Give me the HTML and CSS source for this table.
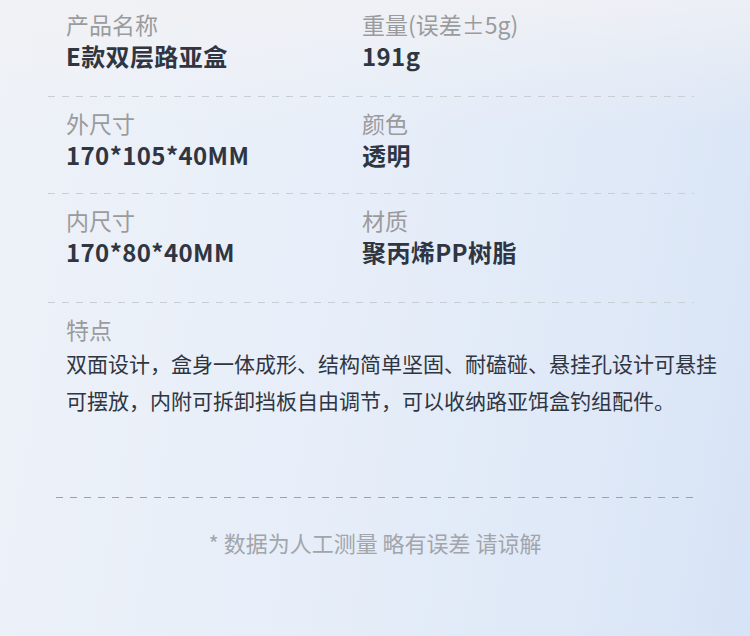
FILE: index.html
```html
<!DOCTYPE html>
<html lang="zh-CN">
<head>
<meta charset="utf-8">
<link rel="stylesheet" href="styles.css">
</head>
<body>
<main class="page">
  <section class="spec">
    <div class="row row-first">
      <div class="cell">
        <div class="label">产品名称</div>
        <div class="value">E款双层路亚盒</div>
      </div>
      <div class="cell">
        <div class="label">重量(误差±5g)</div>
        <div class="value">191g</div>
      </div>
    </div>
    <div class="dash"></div>
    <div class="row">
      <div class="cell">
        <div class="label">外尺寸</div>
        <div class="value">170*105*40MM</div>
      </div>
      <div class="cell">
        <div class="label">颜色</div>
        <div class="value">透明</div>
      </div>
    </div>
    <div class="dash"></div>
    <div class="row row-tall">
      <div class="cell">
        <div class="label">内尺寸</div>
        <div class="value">170*80*40MM</div>
      </div>
      <div class="cell">
        <div class="label">材质</div>
        <div class="value">聚丙烯PP树脂</div>
      </div>
    </div>
    <div class="dash"></div>
    <div class="feature">
      <div class="label">特点</div>
      <p class="desc">双面设计，盒身一体成形、结构简单坚固、耐磕碰、悬挂孔设计可悬挂可摆放，内附可拆卸挡板自由调节，可以收纳路亚饵盒钓组配件。</p>
    </div>
  </section>
  <div class="dash dash-dark"></div>
  <p class="note">* 数据为人工测量 略有误差 请谅解</p>
</main>
</body>
</html>
```

FILE: styles.css
```css
html, body {
  margin: 0;
  padding: 0;
}
body {
  width: 750px;
  height: 636px;
  overflow: hidden;
  font-family: "Noto Sans CJK SC", "Noto Sans", sans-serif;
  background:
    linear-gradient(180deg, rgba(242, 242, 244, 0.75) 0px, rgba(242, 242, 244, 0) 130px),
    linear-gradient(100deg, #eef2f8 0%, #e7eef9 45%, #dee8f7 80%, #d7e3f6 100%);
}
.page {
  height: 636px;
}
.spec {
  padding: 0 0 0 48px;
  width: 646px;
}
.row {
  display: grid;
  grid-template-columns: 296px 1fr;
  padding: 10px 0 22px 18px;
}
.row-first {
  padding-top: 8px;
  padding-bottom: 24px;
}
.row-tall {
  padding-bottom: 34px;
}
.label {
  font-size: 23px;
  line-height: 32px;
  color: #9b9b9d;
  font-weight: 400;
}
.value {
  font-size: 24px;
  line-height: 32px;
  letter-spacing: 0.4px;
  color: #2f3541;
  font-weight: 700;
}
.dash {
  height: 1px;
  background: repeating-linear-gradient(90deg, #c9cdd4 0 7px, transparent 7px 14px);
}
.feature {
  padding: 10px 0 0 18px;
}
.desc {
  margin: 0;
  width: 660px;
  font-size: 21px;
  line-height: 37px;
  color: #2f3541;
}
.dash-dark {
  margin: 78px 0 0 56px;
  width: 643px;
  background: repeating-linear-gradient(90deg, #9ea1a7 0 7px, transparent 7px 14px);
}
.note {
  margin: 29px 0 0;
  text-align: center;
  font-size: 22px;
  line-height: 30px;
  color: #a2a5ab;
}
```
